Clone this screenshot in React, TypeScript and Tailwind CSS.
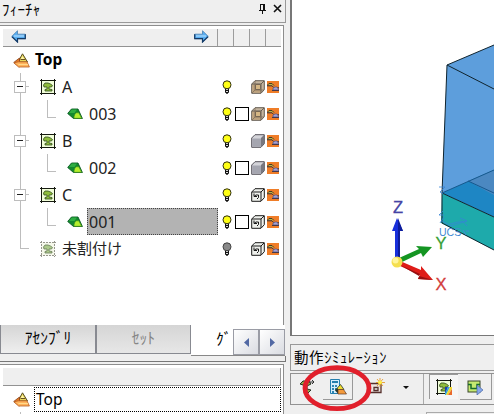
import React from "react";

type Solid = "wire" | "shaded" | "inherit";
type Row = { id: string; label: string; kind: "group" | "part" | "none"; solid: Solid };

const rows: Row[] = [
  { id: "a", label: "A", kind: "group", solid: "wire" },
  { id: "a3", label: "003", kind: "part", solid: "wire" },
  { id: "b", label: "B", kind: "group", solid: "shaded" },
  { id: "b2", label: "002", kind: "part", solid: "shaded" },
  { id: "c", label: "C", kind: "group", solid: "inherit" },
  { id: "c1", label: "001", kind: "part", solid: "inherit" },
  { id: "n", label: "未割付け", kind: "none", solid: "inherit" },
];

const uiFont = "font-['Noto_Sans','Noto_Sans_CJK_JP',sans-serif]";
const kanaFont = "font-['Noto_Sans_CJK_JP',sans-serif]";

function ArrowIcon({ flip = false }: { flip?: boolean }) {
  return (
    <svg width="15" height="13" viewBox="0 0 15 13" className={flip ? "-scale-x-100" : ""}>
      <path d="M.7 6.5 6.5.8v3.4h7.8v4.5H6.5v3.5z" fill="#58aef2" stroke="#5b8fbd" />
      <path d="M1 6.8 6.5 12V8.7h7.8V4.2" fill="none" stroke="#143a66" strokeWidth="1.2" />
      <path d="M3 6h10" stroke="#c0e5ff" />
    </svg>
  );
}

function TopIcon() {
  return (
    <svg width="17" height="15" viewBox="0 0 17 15">
      <path d="M9.5.8 14.5 9 5 9z" fill="#e8d75b" stroke="#554b21" />
      <path d="m9.5 3 2 3.5H7.5z" fill="#fff4a5" />
      <path d="M7.5 6.5h5" stroke="#665020" />
      <path d="M.7 9.5 6.5 5v9z" fill="#e57a25" stroke="#874018" strokeWidth=".8" />
      <path d="M5.5 8.8H14l2.4 5.2H5.5L1 9.8z" fill="#ffb35c" stroke="#b55a21" strokeWidth=".8" />
      <path d="M5.5 11.5h9.5" stroke="#ffda8c" />
    </svg>
  );
}

function GroupIcon({ muted = false, rainbow = false }: { muted?: boolean; rainbow?: boolean }) {
  const ink = muted ? "#96968c" : "#161a10";
  return (
    <svg width="16" height="16" viewBox="0 0 16 16">
      <rect x="1.5" y="1.5" width="13" height="13" fill={muted ? "#f5f8ea" : "#f2ffd9"} />
      <path d="M1.5 0v16M14.5 0v16M0 1.5h16M0 14.5h16" stroke={ink} strokeDasharray={muted ? "2 1" : undefined} />
      <path
        d="M3.5 6 5 4h3l2.5 1 2 1.5-1 1.5H9v2l3 .5V12H5v-1.500l2-.5V8H4z"
        fill={muted ? "#acc98b" : "#8fbd3c"}
        stroke={muted ? "#667a55" : "#2f4a1c"}
        strokeWidth=".8"
      />
      {rainbow && (
        <g>
          <rect x="9" y="8" width="7" height="8" fill="#fff" />
          <path d="M9 8h3l-3 8z" fill="#1f3fae" />
          <path d="M12 8h2l-4 8H9v-2z" fill="#35a9d7" />
          <path d="M14 8h2v2l-4 6h-2z" fill="#f1d62f" />
          <path d="M16 10v6h-4z" fill="#e9692b" />
        </g>
      )}
    </svg>
  );
}

function PartIcon() {
  return (
    <svg width="16" height="12" viewBox="0 0 16 12">
      <path d="M.7 5.5 4.5 1h6.5l4.4 9.5H6.500z" fill="#12892f" stroke="#0a5a22" strokeWidth=".9" />
      <path d="M4.800 1.500h5.200L7.500 5H2z" fill="#2fae42" />
      <path d="M9.500 4.800h2.300l2.900 5.500H7c0-3 .8-4.700 2.500-5.500" fill="#b4ee2e" stroke="#3c8a1c" strokeWidth=".6" />
    </svg>
  );
}

function BulbIcon({ off = false }: { off?: boolean }) {
  return (
    <svg width="10" height="14" viewBox="0 0 10 14">
      <path d="M3.500 8.500h3v4h-3z" fill="#dedede" stroke="#111" />
      <path d="M3 10.500h4M4 13.200h2" stroke="#111" />
      <circle cx="5" cy="4.800" r="4" fill={off ? "#898989" : "#ffff15"} stroke={off ? "#424242" : "#303012"} />
    </svg>
  );
}

function CubeIcon({ type }: { type: Solid }) {
  const stroke = type === "wire" ? "#655d53" : type === "shaded" ? "#55535b" : "#1a1a1a";
  return (
    <svg width="14" height="14" viewBox="0 0 14 14">
      <path d="M.7 4 4 .7h9.300v9L10 13.300H.7z" fill={type === "wire" ? "#c4b49e" : type === "shaded" ? "#d4d4d9" : "#eef0ec"} stroke={stroke} />
      {type !== "inherit" && <path d="M1.200 4.500H10v8.300H1.200z" fill={type === "wire" ? "#bda27d" : "#a5a6b0"} />}
      {type !== "shaded" && <path d="M1 4h9v9M10 4l3-3" fill="none" stroke={stroke} />}
      {type === "wire" && (
        <g fill="none" stroke="#766653">
          <path d="M4 1v9l-3 3M4 10h9" strokeWidth=".7" />
          <path d="M4.500 4.500h5v5h-5z" fill="#d5b684" />
        </g>
      )}
      {type === "shaded" && <path d="m10 4 3-3v8.500l-3 3.500z" fill="#77777f" />}
      {type === "inherit" && <path d="M3 5.500v3h3M3.200 8.300 5 7h2.500v2.500L6 11" fill="none" stroke="#171717" />}
    </svg>
  );
}

function OrangeIcon() {
  return (
    <svg width="12" height="12" viewBox="0 0 12 12">
      <rect width="12" height="12" fill="#ef7d28" />
      <path d="M0 4.500 2 2.500h3l2 2" fill="#bdb54a" stroke="#453d24" />
      <path d="M0 4.800h5l2 2h5" fill="none" stroke="#342c38" />
      <path d="M6 9V7l2-1h2l2 3z" fill="#a3a1d5" stroke="#565178" strokeWidth=".7" />
      <path d="M5 9.500h7" stroke="#43384d" />
    </svg>
  );
}

function Header({ arrows }: { arrows?: boolean }) {
  return (
    <div className={`ml-[3px] mr-[2px] flex h-[18px] shrink-0 border-b border-[#929292] bg-[#efefef] ${arrows ? "" : "border-r border-r-[#999]"}`}>
      {arrows && (
        <>
          <div className="flex w-[214px] shrink-0 items-center justify-between pb-[2px] pl-2 pr-2">
            <ArrowIcon /><ArrowIcon flip />
          </div>
          {[0, 1, 2, 3].map((n) => <div key={n} className="w-4 shrink-0 border-l border-[#9c9c9c]" />)}
          <div className="w-px bg-[#999]" />
        </>
      )}
    </div>
  );
}

function TreeRow({ row }: { row: Row }) {
  const part = row.kind === "part";
  const none = row.kind === "none";
  return (
    <div className="flex h-[27px] items-center">
      <div className={`flex h-full shrink-0 items-center ${part ? "w-[67px]" : "w-10"}`}>
        <div className="ml-[20px] flex h-full flex-col">
          <div className={`w-px bg-[#bdbdbd] ${none ? "h-[14px]" : "h-full"}`} />
        </div>
        {row.kind === "group" && (
          <>
            <div className="relative -ml-[7px] flex size-[12px] items-center justify-center border border-[#bdbdbd] bg-white">
              <div className="h-px w-[6px] bg-[#222]" />
            </div>
            <div className="h-px w-[3px] bg-[#bdbdbd]" />
          </>
        )}
        {none && <div className="h-px w-[8px] bg-[#bdbdbd]" />}
        {part && <div className="mb-[9px] ml-[26px] h-[18px] w-[9px] border-b border-l border-[#bdbdbd]" />}
      </div>
      {part ? <PartIcon /> : <GroupIcon muted={none} />}
      <div className={`flex items-center ${part ? "ml-1 w-[131px]" : "ml-[5px] w-[157px]"} h-[27px] ${row.id === "c1" ? "border border-dotted border-[#444] bg-[#b3b3b3]" : "border border-transparent"}`}>
        <span className={`${uiFont} whitespace-nowrap leading-none text-[#222] ${none ? "text-[15px]" : part ? "pl-px text-[16px]" : "text-[16px]"}`}>{row.label}</span>
      </div>
      <div className="flex w-[17px] justify-center"><BulbIcon off={none} /></div>
      <div className="w-[15px]">{part && <div className="size-[14px] border border-black bg-white" />}</div>
      <div className="flex w-[17px] items-center pl-px"><CubeIcon type={row.solid} /></div>
      <OrangeIcon />
    </div>
  );
}

function FeaturePanel() {
  return (
    <div className="flex w-[290px] shrink-0 flex-col bg-[#efefef]">
      <div className="flex h-[23px] w-[286px] shrink-0 items-start justify-between border-b border-r border-[#999] pl-[2px]">
        <span className={`${kanaFont} text-[15px] leading-[17px] tracking-[0.2px]`}>ﾌｨｰﾁｬ</span>
        <svg width="26" height="12" viewBox="0 0 26 12" className="mr-[2px] mt-[3px]">
          <path d="M3 1.500h5M3.500 1v6M6.500 1v6M7.500 1v6M1.500 7.500h7M5.500 8v3" stroke="#111" fill="none" shapeRendering="crispEdges" />
          <path d="m17 2 7 7m0-7-7 7" stroke="#111" strokeWidth="1.600" />
        </svg>
      </div>
      <div className="mt-[2px] flex h-[300px] w-[284px] shrink-0 flex-col border-r border-t border-[#8d8d8d] bg-white pt-[3px]">
        <Header arrows />
        <div className="flex h-[26px] shrink-0 items-center pl-[13px]">
          <TopIcon />
          <span className={`${uiFont} ml-[5px] text-[15.5px] font-bold leading-none text-black`}>Top</span>
        </div>
        {rows.map((row) => <TreeRow key={row.id} row={row} />)}
      </div>
      <div className="flex h-[31px] shrink-0 items-start">
        <div className="flex h-[29px] w-[97px] items-center justify-center border-b border-l border-r-2 border-[#888a91] bg-linear-to-b from-[#d5d5d5] to-[#efefef] pb-[2px]">
          <span className={`${kanaFont} text-[15.5px] leading-none`}>ｱｾﾝﾌﾞﾘ</span>
        </div>
        <div className="flex h-[29px] w-[94px] items-center justify-center border-b border-r border-[#888a91] bg-linear-to-b from-[#d5d5d5] to-[#e7e7e7] pb-[2px]">
          <span className={`${kanaFont} text-[15.5px] leading-none text-[#858585]`}>ｾｯﾄ</span>
        </div>
        <div className="flex h-[31px] w-[94px] items-end border-b border-[#888] bg-white">
          <span className={`${kanaFont} w-[42px] whitespace-nowrap pb-[9px] pl-[25px] text-[15.5px] leading-none`}>ｸﾞ</span>
          {[false, true].map((right) => (
            <div key={String(right)} className="flex h-[26px] w-[26px] items-center justify-center border border-[#9a9ca5] bg-linear-to-br from-white to-[#dadce2]">
              <svg width="5" height="9" className={right ? "-scale-x-100" : ""}><path d="M5 0v9L0 4.500z" fill="#5269a4" /></svg>
            </div>
          ))}
        </div>
      </div>
      <div className="h-[6px] w-[286px] shrink-0 border-b border-r border-[#777]" />
      <div className="mt-[2px] flex h-[50px] w-[284px] shrink-0 flex-col border-r border-t border-[#8d8d8d] bg-white pt-[3px]">
        <Header />
        <div className="mt-px flex h-[25px] shrink-0 items-center pl-[13px]">
          <TopIcon />
          <div className="ml-1 mr-[2px] flex h-[25px] flex-1 items-center border border-dotted border-black pl-px">
            <span className={`${uiFont} text-[15.5px] leading-none`}>Top</span>
          </div>
        </div>
        <div className="ml-[20px] h-[2px] w-px bg-[#bdbdbd]" />
      </div>
    </div>
  );
}

function Viewport() {
  return (
    <svg width="202" height="335" viewBox="292 0 202 335" className="block bg-white">
      <path d="m447 65 47-20v145l-52 3z" fill="#5d9edc" />
      <path d="m442 193 52-23v47z" fill="#1e86c4" />
      <path d="m468 181 26-11v25z" fill="#4b88c1" />
      <path d="m442 193 52 24v33l-53-27z" fill="#1eaaab" />
      <path d="m447 65 47-20M447 65l47 24M447 65l-5 128v30l52 27M442 193l52 24" fill="none" stroke="#10242e" />
      <path d="m442 193 52-23M468 181l26 12" fill="none" stroke="#16598d" />
      <path d="m439 187 6 0-5 5 3 2m0 17-4 4h5m-4 8 4-6m-2 4 9 5 16-5-7-3m-10 6 13-3 4 5" fill="none" stroke="#3684d5" strokeWidth=".8" />
      <text x="439" y="236" fill="#4189d3" className="font-['Liberation_Sans'] text-[10.5px]">UCS</text>
      <path d="m463 230 3 5m0-4h3" stroke="#4189d3" />
      <path d="M395 260v-29h-3l5-13 6 13h-3v30z" fill="#182fdb" />
      <path d="m398 218 5 13h-3v28l-2 1z" fill="#0d1c9b" />
      <path d="m399 258 20-9-3-3 16 1-9 10-2-4-19 9z" fill="#149522" />
      <path d="m400 261 21 9v-4l12 14-15-1 2-4-20-9z" fill="#df1c18" />
      <path d="m400 265 20 9-2 5 15 1-14-4z" fill="#960e10" />
      <circle cx="397" cy="262" r="5.500" fill="#f5df4f" />
      <circle cx="395.500" cy="260.500" r="3" fill="#fff59b" />
      <g className="font-['Liberation_Sans'] text-[16.5px]">
        <text x="393" y="213" fill="#4544a5" stroke="#4544a5" strokeWidth=".3">Z</text>
        <text x="435.500" y="248.500" fill="#389f35" stroke="#389f35" strokeWidth=".3">Y</text>
        <text x="435.500" y="290" fill="#d23c3b" stroke="#d23c3b" strokeWidth=".3">X</text>
      </g>
    </svg>
  );
}

function SimulationPanel() {
  return (
    <div className="relative h-[78px] bg-[#efefef] pt-[8px]">
      <div className="h-[27px] border border-r-0 border-[#999] pl-[3px]">
        <span className={`${kanaFont} whitespace-nowrap text-[14.5px] leading-[23px] tracking-[0.6px]`}>動作ｼﾐｭﾚｰｼｮﾝ</span>
      </div>
      <div className="mt-[2px] flex h-[32px] border-b border-l border-t border-[#929292]">
        <div className="flex w-[133px] items-start border-r border-[#aaa]">
          <div className="flex h-[25px] w-[32px] items-center justify-center">
            <svg width="16" height="17" viewBox="0 0 16 17">
              <path d="M1 6 4 3h6l2 3-4 2v3l4 1-3 3H5l2-3V8z" fill="#8fae4a" stroke="#272f22" />
              <path d="M9 4h6m-2-2 2 2-2 2" fill="none" stroke="#333" />
            </svg>
          </div>
          <div className="flex h-[26px] w-[30px] items-center justify-center border-b border-r border-[#999]">
            <svg width="18" height="18" viewBox="0 0 18 18">
              <path d="M1.500 1.500h9v14h-9z" fill="#d7edfa" stroke="#247fae" />
              <path d="M3 3h6v2H3z" fill="#247fae" />
              <path d="M3 7h2v2H3zm3 0h2v2H6zM3 10h2v2H3zm3 0h2v2H6zm-3 3h2v2H3z" fill="#2d86b4" />
              <path d="m6.500 12 5-5.500 3.500 5z" fill="#f2db31" stroke="#1e352f" strokeWidth=".8" />
              <path d="M6 12.500 9 10v5.500z" fill="#1e352f" />
              <path d="M9 11.500h5.500l3 4.500H9z" fill="#f39a3b" stroke="#633b25" strokeWidth=".7" />
            </svg>
          </div>
          <div className="flex h-[25px] w-[42px] items-center justify-center pl-[7px]">
            <svg width="17" height="17" viewBox="0 0 17 17">
              <path d="M3 5.500h9v9H3M1 5.500h2m-2 9h2M9 9.500H5v3h4z" fill="#eee5e2" stroke="#55302c" strokeWidth="1.300" />
              <path d="m8 1 6 7m0-7L8 8m3-8v9M7 4.500h9" stroke="#e5911b" strokeWidth=".8" />
              <circle cx="11" cy="4.500" r="2" fill="#ffef43" />
            </svg>
          </div>
          <svg width="6" height="3" className="ml-[8px] mt-[12px]"><path d="M0 0h6L3 3z" fill="#111" /></svg>
        </div>
        <div className="ml-[5px] flex h-[25px] w-[29px] items-center justify-center border-l border-t border-[#999] bg-[#f5f5f5]"><GroupIcon rainbow /></div>
        <div className="ml-[2px] flex h-[26px] w-[32px] items-center justify-center border-b border-r border-[#999]">
          <svg width="17" height="16" viewBox="0 0 17 16">
            <rect x="1" y="2" width="12" height="11" fill="#c5ea70" stroke="#38472a" />
            <path d="M1 5.500h3v4h6v-4h3" fill="none" stroke="#176c2b" strokeWidth="1.500" />
            <path d="m10 6 6 5-6 5z" fill="#87a8e8" stroke="#4a69a9" strokeWidth=".7" />
          </svg>
        </div>
      </div>
      <div className="ml-[136px] mt-[7px] h-[2px] border-l border-t border-[#aaa]" />
      <svg width="74" height="54" viewBox="0 0 74 54" className="absolute left-[10px] top-[25px]">
        <ellipse cx="37" cy="27.200" rx="32" ry="20.500" fill="none" stroke="#e11f2b" strokeWidth="4.800" />
      </svg>
    </div>
  );
}

export default function App() {
  return (
    <main className="flex h-[414px] w-[494px] overflow-hidden bg-[#efefef]">
      <FeaturePanel />
      <div className="flex w-[204px] flex-col">
        <div className="h-[336px] shrink-0 border-b border-l-2 border-[#777] bg-white"><Viewport /></div>
        <SimulationPanel />
      </div>
    </main>
  );
}
